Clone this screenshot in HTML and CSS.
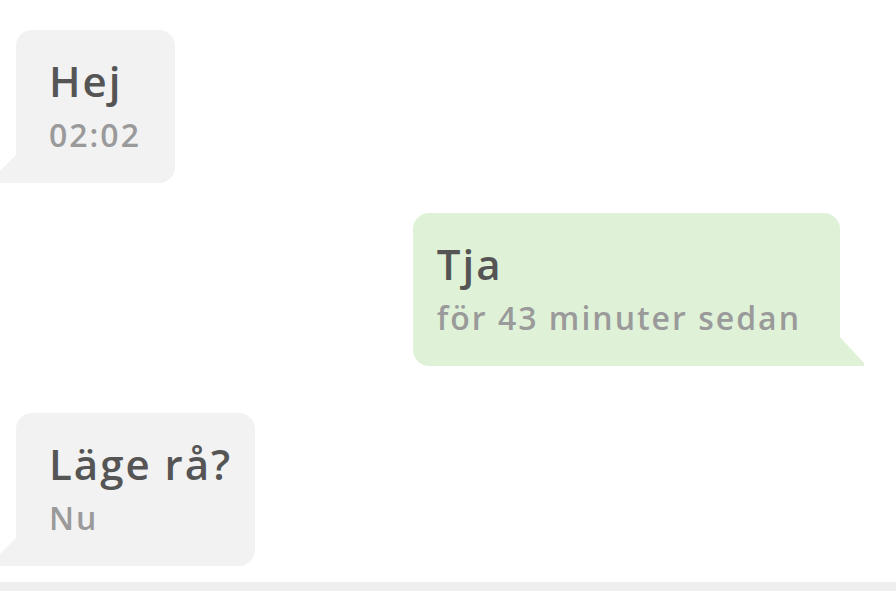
FILE: index.html
```html
<!DOCTYPE html>
<html lang="sv">
<head>
<meta charset="utf-8">
<title>Chatt</title>
<link rel="stylesheet" href="styles.css">
</head>
<body>
<div class="chat">
  <div class="row row-in first">
    <div class="bubble in">
      <div class="text">Hej</div>
      <div class="time">02:02</div>
    </div>
  </div>
  <div class="row row-out">
    <div class="bubble out">
      <div class="text">Tja</div>
      <div class="time">för 43 minuter sedan</div>
    </div>
  </div>
  <div class="row row-in third">
    <div class="bubble in">
      <div class="text">Läge rå?</div>
      <div class="time">Nu</div>
    </div>
  </div>
</div>
<div class="composer"></div>
</body>
</html>
```

FILE: styles.css
```css
html, body {
  margin: 0;
  padding: 0;
  background: #ffffff;
}
body {
  width: 896px;
  height: 604px;
  overflow: hidden;
  font-family: "Open Sans", "Liberation Sans", sans-serif;
  display: flex;
  flex-direction: column;
}
.chat {
  flex: 1;
  display: flex;
  flex-direction: column;
  padding-top: 30px;
}
.row {
  display: flex;
}
.row-in {
  justify-content: flex-start;
  padding-left: 16px;
}
.row-out {
  justify-content: flex-end;
  padding-right: 56px;
  margin-top: 30px;
}
.row.third {
  margin-top: 47px;
}
.bubble {
  position: relative;
  border-radius: 16px;
  height: 153px;
  box-sizing: border-box;
}
.bubble.in {
  background: #f2f2f2;
  border-bottom-left-radius: 0;
  padding: 26px 23px 28px 33px;
  min-width: 159px;
}
.bubble.out {
  background: #dff2d8;
  border-bottom-right-radius: 0;
  padding: 26px 39px 28px 24px;
}
.bubble.in::before {
  content: "";
  position: absolute;
  left: -28px;
  bottom: 0;
  width: 28px;
  height: 28px;
  background: #f2f2f2;
  clip-path: polygon(100% 0, 100% 100%, 0 100%);
}
.bubble.out::after {
  content: "";
  position: absolute;
  right: -24px;
  bottom: 0;
  width: 24px;
  height: 29px;
  background: #dff2d8;
  clip-path: polygon(0 0, 100% 90%, 100% 100%, 0 100%);
}
.text {
  font-size: 42px;
  line-height: 50px;
  font-weight: 600;
  letter-spacing: 2px;
  color: #555555;
  white-space: nowrap;
}
.time {
  margin-top: 9px;
  font-size: 32px;
  line-height: 40px;
  font-weight: 600;
  letter-spacing: 2px;
  color: #9a9a9a;
  white-space: nowrap;
}
.composer {
  height: 9px;
  margin-bottom: 13px;
  background: #efefef;
  flex: none;
}
```
